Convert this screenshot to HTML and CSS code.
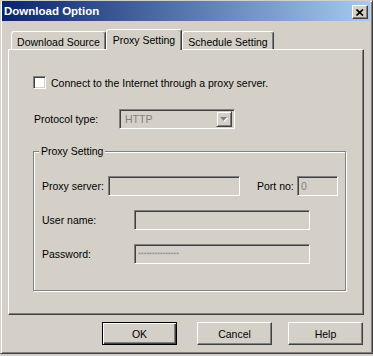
FILE: index.html
```html
<!DOCTYPE html>
<html lang="en">
<head>
    <meta charset="UTF-8">
    <title>Download Option</title>
    <link rel="stylesheet" href="styles.css">
</head>
<body>
    <div class="window">
        <div class="titlebar">
            <span class="title">Download Option</span>
            <span class="close">
                <svg width="8" height="7" viewBox="0 0 8 7">
                    <path d="M0.5 0.5 L7 6.5 M7 0.5 L0.5 6.5" stroke="#000" stroke-width="1.7" fill="none"/>
                </svg>
            </span>
        </div>

        <div class="tabs">
            <div class="tab tab-source">Download Source</div>
            <div class="tab tab-proxy active">Proxy Setting</div>
            <div class="tab tab-schedule">Schedule Setting</div>
        </div>

        <div class="panel">
            <div class="check-row">
                <span class="checkbox"></span>
                <span>Connect to the Internet through a proxy server.</span>
            </div>

            <div class="field-row protocol">
                <span class="label label-protocol">Protocol type:</span>
                <div class="combo">
                    <span class="combo-text">HTTP</span>
                    <span class="combo-btn">
                        <svg width="8" height="5" viewBox="0 0 8 5">
                            <polygon points="1,1 8,1 4.5,5" fill="#fff"/>
                            <polygon points="0,0 7,0 3.5,4" fill="#808080"/>
                        </svg>
                    </span>
                </div>
            </div>

            <fieldset class="group">
                <legend>Proxy Setting</legend>
                <div class="group-body">
                    <div class="field-row">
                        <span class="label label-server">Proxy server:</span>
                        <div class="edit edit-server"></div>
                        <span class="label label-port">Port no:</span>
                        <div class="edit edit-port">0</div>
                    </div>
                    <div class="field-row spaced">
                        <span class="label label-user">User name:</span>
                        <div class="edit edit-wide"></div>
                    </div>
                    <div class="field-row spaced">
                        <span class="label label-user">Password:</span>
                        <div class="edit edit-wide"><span class="stars">***************</span></div>
                    </div>
                </div>
            </fieldset>
        </div>

        <div class="buttons">
            <div class="btn btn-ok default">OK</div>
            <div class="btn btn-cancel">Cancel</div>
            <div class="btn btn-help">Help</div>
        </div>
    </div>
</body>
</html>
```

FILE: styles.css
```css
* {
    box-sizing: border-box;
}
body {
    margin: 0;
    background: #d4d0c8;
    font-family: "Liberation Sans", Arial, sans-serif;
    font-size: 10.5px;
    color: #000;
}
.window {
    width: 373px;
    height: 354px;
    background: #d4d0c8;
    border: 1px solid;
    border-color: #d4d0c8 #404040 #404040 #d4d0c8;
    box-shadow: inset 1px 1px #fff, inset -1px -1px #808080;
    padding: 0 2px 0 1px;
}
.titlebar {
    height: 20px;
    display: flex;
    align-items: center;
    justify-content: space-between;
    padding: 0 2px;
    background: linear-gradient(to right, #0a246a, #a6caf0);
    color: #fff;
}
.title {
    font-weight: bold;
    font-size: 11.5px;
}
.close {
    width: 16px;
    height: 14px;
    margin-top: 2px;
    display: flex;
    align-items: center;
    justify-content: center;
    background: #d4d0c8;
    border: 1px solid;
    border-color: #fff #404040 #404040 #fff;
    box-shadow: inset -1px -1px #808080;
}

/* tabs */
.tabs {
    display: flex;
    align-items: flex-end;
    height: 20px;
    margin-top: 8px;
    padding-left: 9px;
}
.tab {
    height: 18px;
    display: flex;
    align-items: center;
    justify-content: center;
    padding-top: 2px;
    border: 1px solid;
    border-bottom: none;
    border-color: #fff #404040 transparent #fff;
    box-shadow: inset -1px 0 #808080;
    border-radius: 3px 3px 0 0;
}
.tab.active {
    height: 21px;
    margin-bottom: -1px;
    padding-top: 0;
    padding-bottom: 1px;
    position: relative;
    z-index: 1;
    background: #d4d0c8;
}
.tab-source { width: 95px; }
.tab-proxy { width: 76px; }
.tab-schedule { width: 92px; }

.panel {
    width: 356px;
    height: 266px;
    margin-left: 6px;
    border: 1px solid;
    border-color: #fff #404040 #404040 #fff;
    box-shadow: inset -1px -1px #808080;
    padding: 26px 0 0 24px;
}

/* controls */
.check-row {
    display: flex;
    align-items: center;
    height: 13px;
}
.checkbox {
    width: 13px;
    height: 13px;
    margin-right: 5px;
    background: #fff;
    border: 1px solid;
    border-color: #808080 #fff #fff #808080;
    box-shadow: inset 1px 1px #404040, inset -1px -1px #d4d0c8;
}
.field-row {
    display: flex;
    align-items: center;
}
.field-row.spaced {
    margin-top: 14px;
}
.protocol {
    margin-top: 20px;
}
.label {
    padding-left: 1px;
}
.label-protocol { width: 86px; }
.label-server { width: 66px; padding-left: 0; }
.label-port { width: 41px; margin-left: 16px; }
.label-user { width: 92px; padding-left: 0; }

.combo, .edit {
    height: 20px;
    background: #d4d0c8;
    color: #808080;
    border: 1px solid;
    border-color: #808080 #fff #fff #808080;
    box-shadow: inset 1px 1px #404040, inset -1px -1px #d4d0c8;
}
.combo {
    width: 116px;
    display: flex;
    align-items: center;
    justify-content: space-between;
    padding: 2px;
}
.combo-text {
    padding-left: 3px;
}
.combo-btn {
    width: 16px;
    height: 16px;
    display: flex;
    align-items: center;
    justify-content: center;
    border: 1px solid;
    border-color: #d4d0c8 #404040 #404040 #d4d0c8;
    box-shadow: inset 1px 1px #fff, inset -1px -1px #808080;
}
.edit {
    display: flex;
    align-items: center;
    padding-left: 3px;
}
.edit-server { width: 132px; }
.edit-port { width: 41px; }
.edit-wide { width: 176px; }
.stars {
    font-size: 8px;
    letter-spacing: -0.4px;
    color: #909090;
}

.group {
    margin: 16px 0 0;
    width: 313px;
    min-width: 0;
    padding: 0 0 26px;
    border: 1px solid #808080;
    box-shadow: inset 1px 1px #fff, 1px 1px #fff;
}
.group legend {
    margin-left: 5px;
    padding: 0 2px;
    line-height: 13px;
    background: #d4d0c8;
}
.group-body {
    padding: 18px 0 0 8px;
}

/* buttons */
.buttons {
    display: flex;
    margin-top: 7px;
}
.btn {
    width: 75px;
    height: 23px;
    display: flex;
    align-items: center;
    justify-content: center;
    border: 1px solid;
    border-color: #fff #404040 #404040 #fff;
    box-shadow: inset -1px -1px #808080;
}
.btn.default {
    border-color: #000;
    box-shadow: inset 1px 1px #fff, inset -1px -1px #404040, inset -2px -2px #808080;
}
.btn-ok { margin-left: 100px; }
.btn-cancel { margin-left: 20px; }
.btn-help { margin-left: 16px; }
```
